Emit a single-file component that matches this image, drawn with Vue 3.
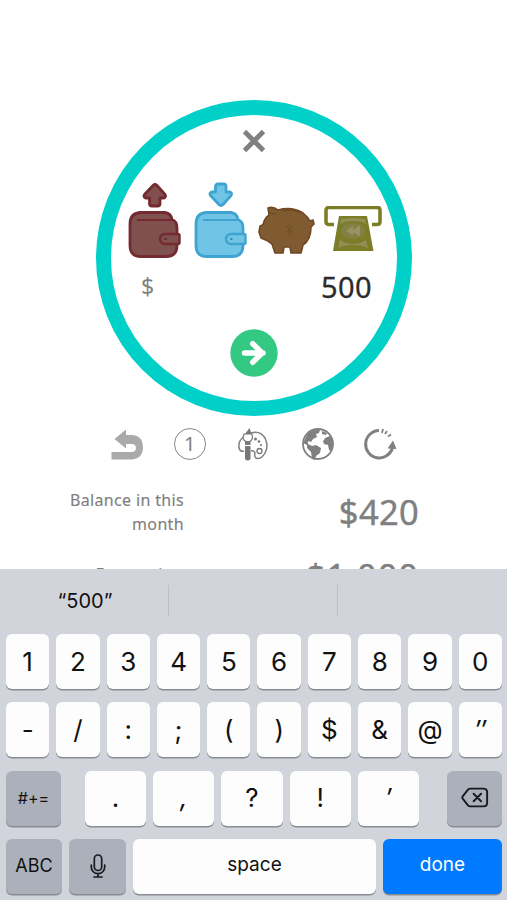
<script setup>
const numbers = ['1', '2', '3', '4', '5', '6', '7', '8', '9', '0']
const symbols = ['-', '/', ':', ';', '(', ')', '$', '&', '@', '″']
const marks = ['.', ',', '?', '!', '′']
const slanted = ['″', '′', ',']
</script>

<template>
  <main class="screen">
    <section class="content">
      <div class="dial">
        <svg class="close" width="24" height="24" viewBox="0 0 24 24"><path d="M2.500 2.500 21.500 21.500M21.500 2.500 2.500 21.500" stroke="#808080" stroke-width="4.800" /></svg>
        <div class="kinds">
          <svg v-for="k in ['out', 'in']" :key="k" class="wallet" :class="k" width="54" height="78" viewBox="0 0 54 78">
            <path v-if="k === 'out'" d="M24 25q-2.500 0-2.500-2.500V17h-4q-2.500-1-1-3.500L25 4.500q2-2 4 0l8 9q1.500 2.500-1 3.500h-4v5.500q0 2.500-2.500 2.500z" />
            <path v-else d="M24 3h5.500q2.500 0 2.500 2.500V11h4q2.500 1 1 3.500L29 23.500q-2 2-4 0l-8.500-9q-1.500-2.500 1-3.500h4V5.500Q21.500 3 24 3z" />
            <path d="M12 31.500H37q6 1 7 7 5 2 5 8v18q0 11-11 11H13Q2 75.500 2 64.500V43q0-10.500 10-11.500z" />
            <path d="M9 39h35" fill="none" stroke-width="2" />
            <path d="M37 53h13q1.500 0 1.500 1.500v7q0 1.500-1.500 1.500H37a5 5 0 0 1 0-10z" stroke-width="2.400" />
            <circle cx="37.500" cy="58" r="1.100" class="stud" />
          </svg>
          <svg class="pig" width="57" height="49" viewBox="0 0 57 49">
            <path d="M10 2q5-2 10 2 14-4 25 3 5 4 7 8l3-1 1 4-3 3q0 13-8 18l-2 8H33l-1-6h-6l-1 6H17l-3-9-4-3-7-3-2-6 1-6q4-1 4-5 2-4 5-6z" fill="#805a30" stroke="#6f4823" stroke-width="1.600" stroke-linejoin="round" />
            <path d="M24 5q10-3 18 2M12 7l6 1" fill="none" stroke="#6a4420" stroke-width="1" />
            <path d="M28 20l7 7m0-7-7 7m3.500-9v13" fill="none" stroke="#735026" stroke-width="1.200" />
          </svg>
          <svg class="cash" width="58" height="46" viewBox="0 0 58 46">
            <path d="M10 18.500H5q-3 0-3-3V4.500q0-3 3-3h48q3 0 3 3v11q0 3-3 3h-5" fill="none" stroke="#7b7e26" stroke-width="3.600" />
            <path d="M15 10h28l6.500 35H9z" fill="#7b7e26" />
            <path d="M17 13q12-2 24 0l1 5q-5-3-13-3t-13 3zM16 34q13 8 26 0l2 8q-6-3-15-3t-15 3z" fill="#918e57" />
            <ellipse cx="29" cy="25" rx="12" ry="8" fill="#838044" />
            <path d="m22 25 7-5v3.500l7-4v11l-7-4V30z" fill="#969263" />
          </svg>
        </div>
        <div class="amount"><span class="currency">$</span><span class="value">500</span></div>
        <svg class="submit" width="48" height="48" viewBox="0 0 48 48"><circle cx="24" cy="24" r="23.700" fill="#34c983" /><path d="M14.500 24H33M22.700 14.700 32.200 24l-9.500 9.300" fill="none" stroke="#fff" stroke-width="5.400" stroke-linecap="round" /></svg>
      </div>

      <nav class="tools">
        <svg viewBox="0 0 34 34"><path d="M1.500 25h20q4.500 0 4.500-4t-4.500-4H16v4.500L4.500 12 16 2.500V8h7q10 1.500 10 12 0 11.500-11 12.500H1.500z" fill="#aaa" /></svg>
        <span class="badge"><span>1</span></span>
        <svg viewBox="0 0 34 34">
          <path d="M7.500 10Q2 14 3 21q1 4 5 3M15 6q9-3 14 5 4 8 0 15-4 7-9 5-2-1-1-5-1-3-4-2" fill="none" stroke="#808080" stroke-width="1.500" />
          <path d="m9 7 4.500-6 2 6zM9 13.500h5.500V32q-3 3-5.500 0z" fill="#777" />
          <path d="M8 7h8l.5 4q-1 3-3 3.500h-3.500Q8 14 7 11z" fill="#fff" stroke="#777" stroke-width="1.200" />
          <path d="M8 18.500h8" stroke="#fff" stroke-width="1.200" />
          <g fill="#777"><circle cx="19.500" cy="12" r="1.500" /><circle cx="23" cy="14.500" r="1.300" /><circle cx="25" cy="18" r="1.100" /></g>
          <circle cx="23.500" cy="24" r="2.500" fill="none" stroke="#777" stroke-width="1.300" />
        </svg>
        <svg class="globe" viewBox="0 0 34 34">
          <circle cx="17" cy="17" r="15" fill="#fff" stroke="#808080" stroke-width="1.800" />
          <path d="M3 14 7 6l6-3 6 0-1 3-3 1 1 3-4 2-2 3-3-1 0 3 4 2 4-1 5 3-1 5-4 3-1 4-3-1-1-7-4-4 0-3-4-2zM23 13l1-2 5-2 3 5 0 6-2 4-2-1-1-5-4-1-1-3zM21 4l5 2-1 2-4-1z" fill="#808080" />
        </svg>
        <svg viewBox="0 0 34 34">
          <path d="M16 3.500A13.700 13.700 0 1 0 29.500 21" fill="none" stroke="#808080" stroke-width="3" />
          <path d="m24.500 21.500 5.500-8 3.500 8.500z" fill="#808080" />
          <path d="m20 2-1 4M24 4l-2 3M28 7.500l-3 2" stroke="#808080" stroke-width="1.800" />
        </svg>
      </nav>

      <dl class="totals">
        <div class="total"><dt>Balance in this month</dt><dd>$420</dd></div>
        <div class="total second"><dt>Expensive</dt><dd>$1,000</dd></div>
      </dl>
    </section>

    <section class="keyboard">
      <div class="suggestions"><span>“500”</span><span></span><span></span></div>
      <div class="keys">
        <div class="row"><button v-for="n in numbers" :key="n" class="key">{{ n }}</button></div>
        <div class="row"><button v-for="s in symbols" :key="s" class="key" :class="{ slanted: slanted.includes(s) }">{{ s }}</button></div>
        <div class="row marks-row">
          <button class="key dark shift">#+=</button>
          <div class="marks"><button v-for="m in marks" :key="m" class="key" :class="{ slanted: slanted.includes(m) }">{{ m }}</button></div>
          <button class="key dark delete">
            <svg width="28" height="21" viewBox="0 0 30 22" fill="none" stroke="#16191d" stroke-width="2" stroke-linejoin="round" stroke-linecap="round"><path d="M10 1.500h14q4 0 4 4v11q0 4-4 4H10q-1.500 0-2.500-1L2 12.500q-1.200-1.500 0-3L7.500 2.500q1-1 2.500-1zM13.500 7l8 8m0-8-8 8" /></svg>
          </button>
        </div>
        <div class="row">
          <button class="key dark abc">ABC</button>
          <button class="key dark mic">
            <svg width="16" height="24" viewBox="0 0 16 24" fill="none" stroke="#16191d" stroke-width="1.700" stroke-linecap="round"><rect x="4.300" y="1" width="7.400" height="15.500" rx="3.700" /><path d="M1.300 11v2a6.700 6.700 0 0 0 13.400 0v-2M8 19.700V23M4 23h8" /></svg>
          </button>
          <button class="key word space">space</button>
          <button class="key word done">done</button>
        </div>
      </div>
    </section>
  </main>
</template>

<style>
body { background: #fff; }
</style>

<style scoped>
* { box-sizing: border-box; }
svg { display: block; flex: none; }
.screen { width: 507px; height: 900px; display: flex; flex-direction: column; overflow: hidden; font-family: "Noto Sans", sans-serif; color: #808080; }
.content { height: 569px; padding-top: 100px; overflow: hidden; }
.dial { width: 316px; height: 316px; margin: 0 auto; border: 15px solid #00d0c8; border-radius: 50%; display: flex; flex-direction: column; align-items: center; padding-top: 14px; }
.kinds { display: flex; align-items: flex-end; margin-top: 28px; height: 78px; width: 252px; flex: none; }
.wallet { stroke-width: 2.800px; stroke-linejoin: round; }
.wallet.in { margin-left: 12px; }
.out { fill: #80504f; stroke: #732a30; }
.in { fill: #70c5e6; stroke: #3fa4cf; }
.stud { stroke: none; fill: #45272b; }
.in .stud { fill: #277da5; }
.pig { margin: 0 0 4px 10px; }
.cash { margin: 0 0 7px 9px; }
.amount { width: 231px; height: 38px; margin-top: 8px; display: flex; justify-content: space-between; align-items: center; flex: none; padding-left: 3px; }
.currency { font-size: 23px; }
.value { font-size: 29px; color: #2b2b2b; margin-right: -3px; letter-spacing: .4px; -webkit-text-stroke: .3px #2b2b2b; }
.submit { margin-top: 24px; }
.tools { display: flex; justify-content: space-between; margin: 11px auto 0; width: 287px; height: 34px; }
.tools svg { width: 34px; height: 34px; }
.tools .globe { margin: 0 -2px 0 2px; }
.badge { width: 32px; height: 32px; margin: 1px 0; border: 1.500px solid #888; border-radius: 50%; display: grid; place-items: center; font-size: 20px; line-height: 1; }
.totals { margin: 18px 0 0; }
.total { display: flex; align-items: center; height: 66px; padding-left: 53px; }
.total dt { width: 131px; text-align: right; font-size: 16px; line-height: 24px; letter-spacing: .35px; -webkit-text-stroke: .15px #808080; }
.total dd { margin: 0; width: 235px; text-align: right; font-size: 34.500px; line-height: 46px; letter-spacing: .3px; -webkit-text-stroke: .4px #808080; }
.second { height: 58px; }
.total.second dt { letter-spacing: 1.500px; }
.total.second dd { padding-top: 3px; letter-spacing: .9px; }
.keyboard { height: 331px; background: #d1d4db; font-family: Inter, "Liberation Sans", sans-serif; color: #111; }
.suggestions { display: grid; grid-template-columns: 169px 169px 169px; height: 65px; padding: 16px 0 18px; }
.suggestions span { display: flex; align-items: center; justify-content: center; font-size: 20px; border-right: 1px solid #bcc0c6; }
.suggestions span:first-child { padding-left: 2px; }
.suggestions span:last-child { border: 0; }
.keys { display: flex; flex-direction: column; gap: 13.300px; padding: 0 5px 0 6px; }
.row { display: flex; gap: 7px; height: 55px; }
.key { flex: 1 1 0; min-width: 0; height: 55px; border: 0; border-radius: 6px; margin: 0; padding: 0 0 1px; background: #fdfdfd; box-shadow: 0 1.500px 0 #898c92; font: 26px Inter, "Liberation Sans", sans-serif; color: #111; display: flex; align-items: center; justify-content: center; }
.key.slanted { font-style: italic; }
.key.dark { background: #abb0bb; }
.key.shift { flex: 0 0 55px; font-size: 16px; }
.key.delete { flex: 0 0 55px; }
.marks-row { justify-content: space-between; gap: 0; }
.marks { display: flex; gap: 7px; width: 334px; margin-right: 4px; }
.key.abc { flex: 0 0 56px; font-size: 18px; }
.key.mic { flex: 0 0 57px; }
.key.word { font-size: 19px; padding-bottom: 3px; }
.key.space { flex: 0 0 243px; }
.key.done { background: #007aff; color: #fff; }
</style>
